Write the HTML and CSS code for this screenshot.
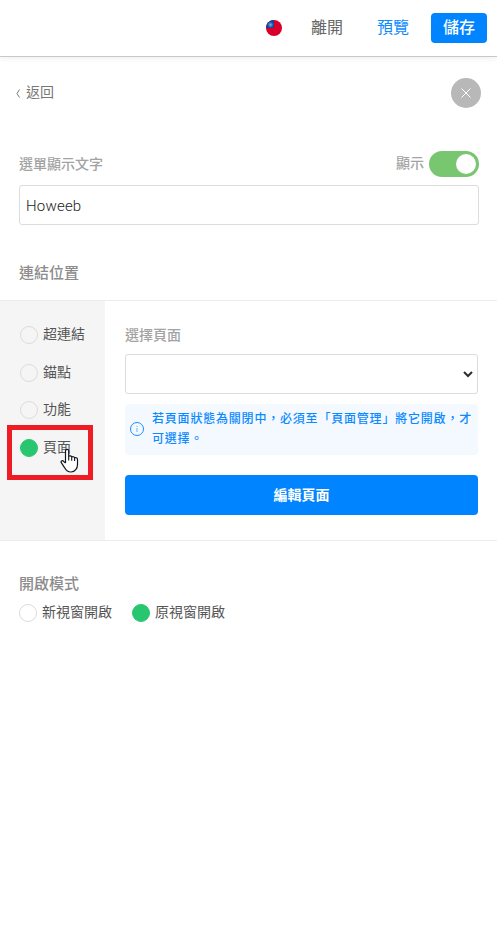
FILE: index.html
```html
<!DOCTYPE html>
<html lang="zh-Hant">
<head>
<meta charset="utf-8">
<title>Howeeb</title>
<link rel="stylesheet" href="styles.css">
</head>
<body>
<header class="topbar">
  <svg class="flag" viewBox="0 0 16 16">
    <defs>
      <clipPath id="disc"><circle cx="8" cy="8" r="8"/></clipPath>
      <radialGradient id="sun"><stop offset="0" stop-color="#8fb0dc"/><stop offset=".4" stop-color="#5580c2"/><stop offset="1" stop-color="#0a45a0"/></radialGradient>
    </defs>
    <g clip-path="url(#disc)">
      <rect width="16" height="16" fill="#d8002b"/>
      <rect width="8" height="8" fill="#0a45a0"/>
      <circle cx="4.5" cy="4.8" r="3.2" fill="url(#sun)"/>
    </g>
  </svg>
  <a class="leave">離開</a>
  <a class="preview">預覽</a>
  <button class="save">儲存</button>
</header>
<main>
  <div class="nav-row">
    <a class="back"><svg width="4" height="9" viewBox="0 0 4 9"><path d="M3.500 .5 1 4.500l2.500 4" fill="none" stroke="#777"/></svg>返回</a>
    <button class="close" aria-label="關閉"><svg width="10" height="10" viewBox="0 0 10 10"><path d="M.5.5l9 9M9.500.5l-9 9" stroke="#fff" stroke-width="1"/></svg></button>
  </div>
  <div class="field-head">
    <label class="label">選單顯示文字</label>
    <span class="toggle-group"><span class="label">顯示</span><span class="toggle"></span></span>
  </div>
  <input class="text-input" type="text" value="Howeeb">
  <h2 class="section-title link-title">連結位置</h2>
  <section class="link-panel">
    <div class="types">
      <label class="option"><i class="radio"></i>超連結</label>
      <label class="option"><i class="radio"></i>錨點</label>
      <label class="option"><i class="radio"></i>功能</label>
      <label class="option"><i class="radio checked"></i>頁面</label>
      <div class="highlight"></div>
      <svg class="cursor" width="20" height="26" viewBox="0 0 20 26">
        <path d="M5.500 15V3c0-2.300 3.200-2.300 3.200 0v5.500c.8-1 2.700-.7 3 .6.800-.8 2.600-.4 2.900.8.900-.7 2.900-.2 2.900 1.500v5c0 4-2.500 7.600-6.500 7.600-3.500 0-5-1.700-6.300-4.200L1.300 14.700c-.8-1.600 1-2.600 2.300-1.400l1.900 1.900" fill="#fff" stroke="#15151f" stroke-width="1.200" stroke-linejoin="round"/>
        <path d="M8.700 8.500v4M11.700 9.200v3.500M14.600 10v3" stroke="#15151f" stroke-width="1.100"/>
      </svg>
    </div>
    <div class="detail">
      <label class="label">選擇頁面</label>
      <div class="select"><svg width="10" height="7" viewBox="0 0 10 7"><path d="M1 1l4 4 4-4" fill="none" stroke="#2b2d30" stroke-width="2"/></svg></div>
      <div class="notice">
        <svg width="14" height="14" viewBox="0 0 14 14"><circle cx="7" cy="7" r="6.500" fill="none" stroke="#1a8fff"/><path d="M7 6v4M7 4v1" stroke="#65b2ff"/></svg>
        <p>若頁面狀態為關閉中，必須至「頁面管理」將它開啟，才可選擇。</p>
      </div>
      <button class="edit">編輯頁面</button>
    </div>
  </section>
  <h2 class="section-title mode-title">開啟模式</h2>
  <div class="modes">
    <label class="option"><i class="radio"></i>新視窗開啟</label>
    <label class="option"><i class="radio checked"></i>原視窗開啟</label>
  </div>
</main>
</body>
</html>
```
FILE: styles.css
```css
* { box-sizing: border-box; }
body {
  margin: 0;
  min-height: 937px;
  background: #fff;
  color: #555;
  font: 14px/20px Roboto, "Noto Sans CJK TC", sans-serif;
}
button { border: 0; padding: 0; font-family: inherit; color: #fff; }
svg { display: block; flex: none; }
.topbar {
  display: flex;
  align-items: center;
  justify-content: flex-end;
  height: 57px;
  padding: 0 10px 1px 0;
  border-bottom: 1px solid #c8c8c8;
  box-shadow: 0 2px 6px rgba(0, 0, 0, .06);
  font-size: 16px;
}
.flag { width: 16px; height: 16px; margin-right: 29px; }
.leave { margin-right: 34px; color: #666; }
.preview { margin-right: 22px; color: #0d8aff; }
.save {
  width: 56px;
  height: 30px;
  border-radius: 4px;
  background: #0084ff;
  font-size: 16px;
  font-weight: 500;
  line-height: 30px;
}
.nav-row {
  display: flex;
  align-items: center;
  justify-content: space-between;
  height: 30px;
  margin: 21px 16px 0;
}
.back { display: flex; align-items: center; gap: 6px; margin-top: -2px; color: #777; }
.back svg { margin-top: 3px; }
.close {
  display: flex;
  align-items: center;
  justify-content: center;
  width: 30px;
  height: 30px;
  border-radius: 50%;
  background: #b8b8b8;
}
.label { color: #a3a3a3; font-weight: 500; }
.field-head {
  display: flex;
  align-items: center;
  justify-content: space-between;
  height: 26px;
  margin: 43px 18px 8px 19px;
}
.toggle-group { display: flex; align-items: center; gap: 5px; }
.toggle-group .label { margin-top: -2px; }
.toggle {
  display: flex;
  justify-content: flex-end;
  width: 50px;
  height: 26px;
  padding: 3px;
  border-radius: 13px;
  background: #78c670;
}
.toggle::after {
  content: "";
  width: 20px;
  height: 20px;
  border-radius: 50%;
  background: #fff;
}
.text-input {
  display: block;
  width: 460px;
  height: 40px;
  margin: 0 18px 0 19px;
  padding: 2px 6px 0;
  border: 1px solid #dcdcdc;
  border-radius: 3px;
  color: #222;
  font: 300 15px Roboto, sans-serif;
  letter-spacing: .2px;
}
.section-title {
  margin: 0 19px;
  color: #8c8c8c;
  font-size: 15px;
  font-weight: 500;
  line-height: 22px;
}
.link-title { margin-top: 37px; margin-bottom: 16px; }
.link-panel {
  display: grid;
  grid-template-columns: 105px 1fr;
  height: 241px;
  border: solid #ececec;
  border-width: 1px 0;
}
.types {
  position: relative;
  display: flex;
  flex-direction: column;
  gap: 17.500px;
  padding: 23px 0 0 20px;
  background: #f5f5f5;
}
.option { display: flex; align-items: center; gap: 5px; height: 20px; }
.radio {
  width: 18px;
  height: 18px;
  margin-top: 2px;
  border: 1px solid #dcdcdc;
  border-radius: 50%;
}
.radio.checked { border-color: #28c76f; background: #28c76f; }
.highlight {
  position: absolute;
  left: 7px;
  top: 124px;
  width: 86px;
  height: 55px;
  border: 5px solid #ee1c24;
}
.cursor { position: absolute; left: 60px; top: 147px; }
.detail { padding: 24px 19px 0 20px; }
.detail .label { display: block; }
.select {
  display: flex;
  align-items: center;
  justify-content: flex-end;
  height: 40px;
  margin-top: 9px;
  padding-right: 4px;
  border: 1px solid #dcdcdc;
  border-radius: 3px;
}
.notice {
  display: flex;
  align-items: center;
  gap: 8px;
  height: 51px;
  margin-top: 10px;
  padding: 0 0 1px 5px;
  border-radius: 4px;
  background: #f4f9ff;
  color: #0d8aff;
}
.notice p {
  margin: 0;
  font-size: 12px;
  font-weight: 500;
  letter-spacing: .8px;
  line-height: 20px;
}
.edit {
  display: block;
  width: 100%;
  height: 40px;
  margin-top: 20px;
  padding-bottom: 2px;
  border-radius: 4px;
  background: #0084ff;
  font-size: 14px;
  font-weight: 700;
}
.mode-title { margin-top: 32px; }
.modes { display: flex; gap: 20px; margin: 7px 19px 0; }
```
